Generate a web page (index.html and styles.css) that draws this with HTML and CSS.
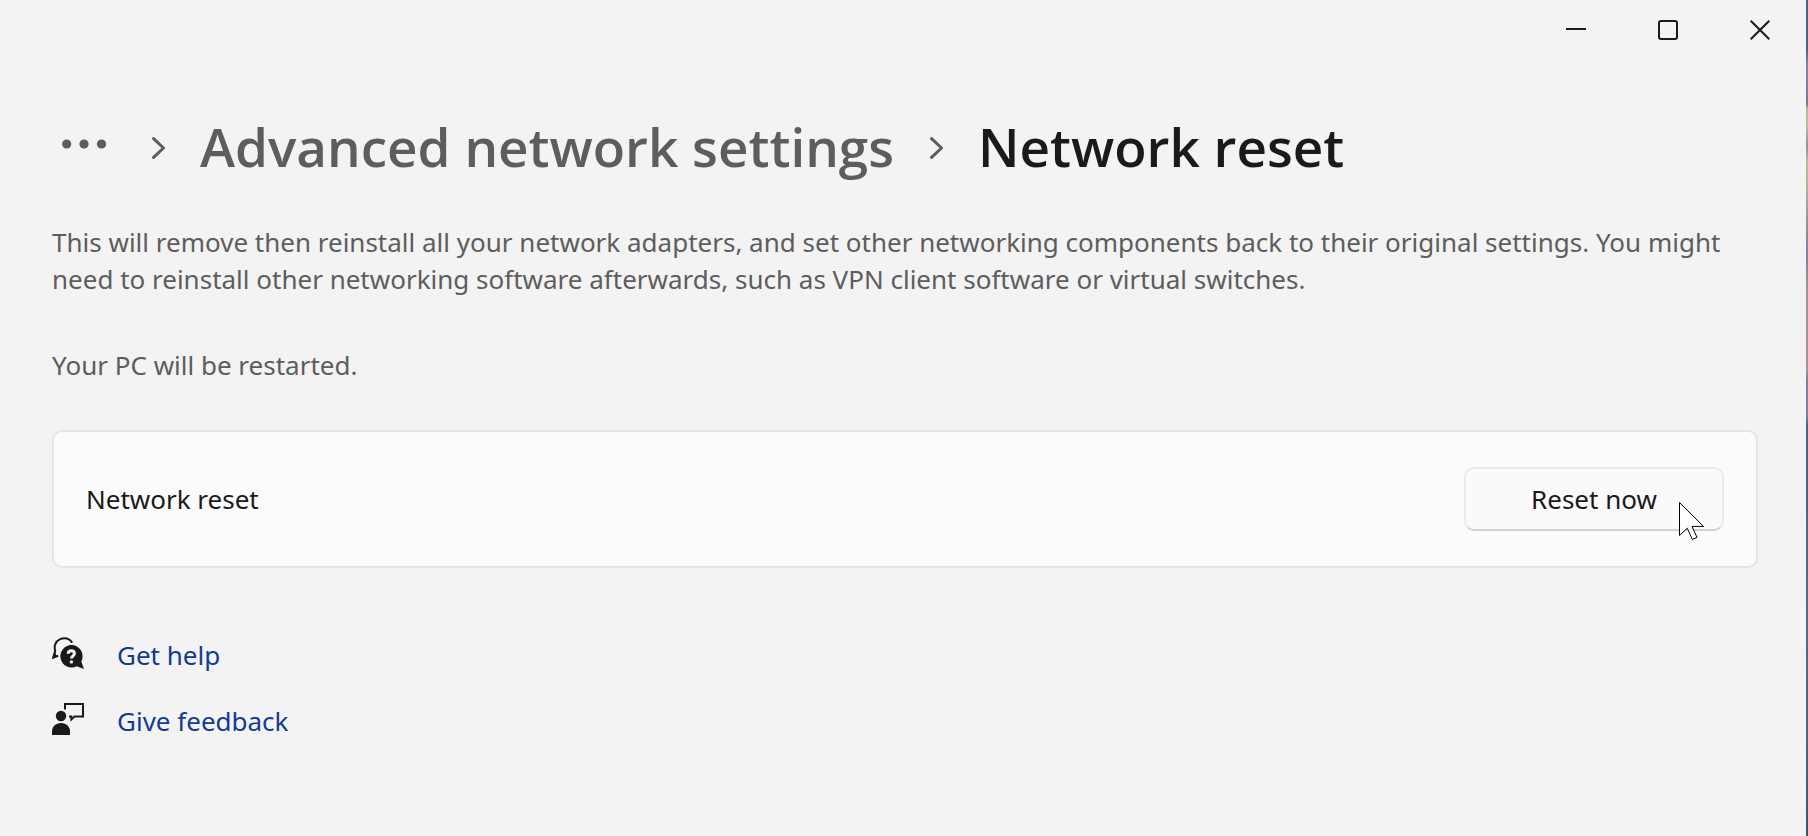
FILE: index.html
```html
<!DOCTYPE html>
<html lang="en">
<head>
<meta charset="utf-8">
<meta name="viewport" content="width=device-width, initial-scale=1">
<title>Network reset</title>
<link rel="stylesheet" href="styles.css">
</head>
<body>
<div class="window">
  <header class="titlebar">
    <button class="caption" type="button" aria-label="Minimize">
      <svg class="caption-icon" viewBox="0 0 20 20" aria-hidden="true"><path d="M0 9h20"/></svg>
    </button>
    <button class="caption" type="button" aria-label="Maximize">
      <svg class="caption-icon" viewBox="0 0 20 20" aria-hidden="true"><rect x="1" y="1" width="18" height="18" rx="2"/></svg>
    </button>
    <button class="caption" type="button" aria-label="Close">
      <svg class="caption-icon" viewBox="0 0 20 20" aria-hidden="true"><path d="M.7.7l18.6 18.6M19.3.7L.7 19.3"/></svg>
    </button>
  </header>
  <main class="content">
    <nav class="breadcrumb" aria-label="Breadcrumb">
      <button class="more" type="button" aria-label="More">
        <svg class="dots" viewBox="0 0 44 10" aria-hidden="true"><circle cx="4.7" cy="5" r="4.6"/><circle cx="22" cy="5" r="4.6"/><circle cx="39.5" cy="5" r="4.6"/></svg>
      </button>
      <svg class="chevron" viewBox="0 0 14 22" aria-hidden="true"><path d="M1.6 1.6L11.5 11l-9.9 9.4"/></svg>
      <a class="crumb" href="#advanced">Advanced network settings</a>
      <svg class="chevron" viewBox="0 0 14 22" aria-hidden="true"><path d="M1.6 1.6L11.5 11l-9.9 9.4"/></svg>
      <h1 class="crumb current">Network reset</h1>
    </nav>
    <div class="description">
      <p>This will remove then reinstall all your network adapters, and set other networking components back to their original settings. You might need to reinstall other networking software afterwards, such as VPN client software or virtual switches.</p>
      <p>Your PC will be restarted.</p>
    </div>
    <section class="card">
      <span>Network reset</span>
      <div class="action">
        <button class="reset" type="button">Reset now</button>
        <svg class="pointer" viewBox="0 0 26 39" aria-hidden="true"><path d="M.5.5v33l7.8-7.3 5 11.2 4.7-2-5-11h11.5z"/></svg>
      </div>
    </section>
    <div class="links">
      <a class="link" href="#help">
        <svg class="link-icon" viewBox="0 0 32 32" aria-hidden="true">
          <path class="line" d="M20.2 5.6C17.6 1.4 12.5.1 8.2 2.1 3.4 4.3 1.7 9.3 3.2 13.6L1.2 20.6l5-1.8"/>
          <path d="M0 22l3-7.5 1.2 3.5 2 1.6z"/>
          <path d="M19.4 8.1a11.2 11.2 0 1 0 5.2 21.2L32 32l-2.7-7.4A11.2 11.2 0 0 0 19.4 8.1z"/>
          <path class="mark" d="M16.2 16.8c0-2 1.3-3 3.1-3s3.1 1.1 3.1 2.8c0 2.3-2.9 2.4-2.9 5"/>
          <circle class="point" cx="19.4" cy="24.9" r="1.7"/>
        </svg>
        <span>Get help</span>
      </a>
      <a class="link" href="#feedback">
        <svg class="link-icon" viewBox="0 0 32 32" aria-hidden="true">
          <circle cx="9" cy="13" r="5.2"/>
          <path d="M0 32v-3.5C0 23.6 3.6 20 9 20s9 3.6 9 8.5V32z"/>
          <path class="line" d="M13 6.5V1h18v12.5h-8.5l-3.2 3v-3H17"/>
        </svg>
        <span>Give feedback</span>
      </a>
    </div>
  </main>
</div>
</body>
</html>
```
FILE: styles.css
```css
* { box-sizing: border-box; }

body {
  margin: 0;
  background: linear-gradient(#4d648c 0, #4d648c 50px, #85829b 65px, #85829b 80px, #767795 104px, #bbb7a4 109px, #bbb7a4 125px, #9b8f98 147px, #bbb7a4 162px, #b8b09f 186px, #9f959b 215px, #81819a 255px, #a19399 290px, #a69297 370px, #80809a 380px, #7d7e9b 416px, #4f628c 426px, #4d6c8b 640px, #466479 760px, #335870 100%);
  color: #1a1a1a;
  font-family: "Noto Sans", "Open Sans", sans-serif;
  font-size: 26px;
  line-height: 37px;
}

button { border: 0; background: none; padding: 0; font: inherit; color: inherit; }
p, h1 { margin: 0; }

.window {
  min-height: 100vh;
  margin-right: 2px;
  background: #f3f3f3;
}

.titlebar { display: flex; justify-content: flex-end; }
.caption { width: 92px; height: 60px; display: grid; place-items: center; }
.caption-icon { width: 20px; height: 20px; fill: none; stroke: #1a1a1a; stroke-width: 2; }

.content { padding: 48px 48px 48px 52px; }

.breadcrumb { display: flex; align-items: center; color: #5d5d5d; }
.more { display: grid; padding: 0 10px 8px; }
.dots { width: 44px; height: 10px; fill: #5d5d5d; }
.chevron { width: 14px; height: 22px; margin: 0 34px 0 36px; fill: none; stroke: #5d5d5d; stroke-width: 3; stroke-linecap: round; stroke-linejoin: round; }
.crumb { padding-bottom: 2px; color: inherit; text-decoration: none; font-family: "Open Sans", "Noto Sans", sans-serif; font-size: 53px; font-weight: 600; line-height: 78px; }
.current { color: #1a1a1a; }

.description { display: grid; gap: 49px; margin-top: 36px; color: #5d5d5d; }

.card {
  display: flex;
  align-items: center;
  justify-content: space-between;
  margin-top: 46px;
  padding: 35px 32px;
  border: 2px solid #e5e5e5;
  border-radius: 10px;
  background: #fbfbfb;
}
.action { position: relative; }
.reset {
  min-width: 260px;
  height: 64px;
  border: 2px solid #ebebeb;
  border-bottom-color: #d0d0d0;
  border-radius: 10px;
  background: #fafafa;
}
.pointer { position: absolute; right: 19px; bottom: -10px; width: 26px; height: 39px; fill: #fff; stroke: #000; stroke-width: 1; }

.links { display: grid; justify-items: start; gap: 29px; margin-top: 69px; }
.link { display: flex; align-items: flex-start; gap: 33px; color: #133b91; text-decoration: none; }
.link-icon { width: 32px; height: 32px; fill: #1a1a1a; }
.line { fill: none; stroke: #1a1a1a; stroke-width: 2; }
.mark { fill: none; stroke: #f3f3f3; stroke-width: 3; }
.point { fill: #f3f3f3; }
```
